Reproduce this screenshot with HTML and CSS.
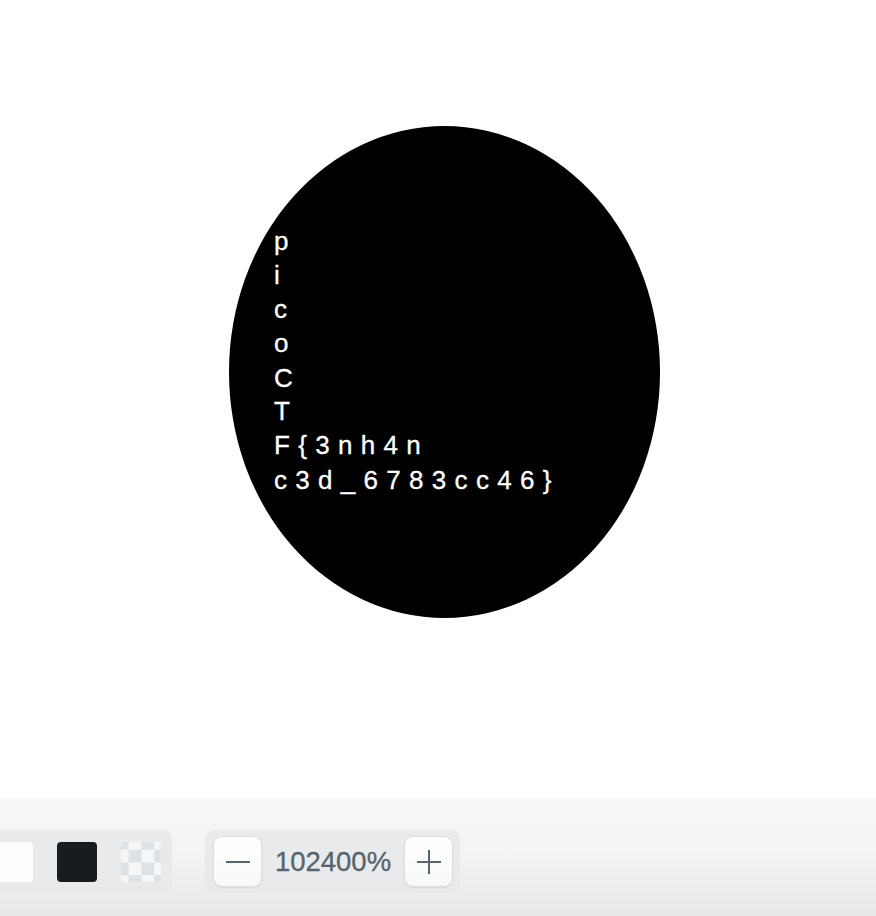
FILE: index.html
```html
<!DOCTYPE html>
<html lang="en">
<head>
<meta charset="utf-8">
<title>Image viewer</title>
<link rel="stylesheet" href="styles.css">
</head>
<body>
<main class="viewer">
  <div class="canvas">
    <svg class="drawing" width="876" height="798" viewBox="0 0 876 798" xmlns="http://www.w3.org/2000/svg">
      <ellipse cx="444.5" cy="372" rx="215.5" ry="246" fill="#000"/>
      <text class="flag" x="274" y="250">
        <tspan x="274" y="250">p</tspan>
        <tspan x="274" y="284">i</tspan>
        <tspan x="274" y="318">c</tspan>
        <tspan x="274" y="352">o</tspan>
        <tspan x="274" y="387">C</tspan>
        <tspan x="274" y="420">T</tspan>
        <tspan x="274" y="454">F{3nh4n</tspan>
        <tspan x="274" y="489">c3d_6783cc46}</tspan>
      </text>
    </svg>
  </div>
  <footer class="toolbar">
    <div class="group swatches">
      <span class="swatch swatch-white"></span>
      <span class="swatch swatch-black"></span>
      <span class="swatch swatch-checker"></span>
    </div>
    <div class="group zoom">
      <button class="zbtn" aria-label="Zoom out">
        <svg width="24" height="24" viewBox="0 0 24 24"><path d="M0 12H24" stroke="#56656f" stroke-width="2"/></svg>
      </button>
      <span class="zlevel">102400%</span>
      <button class="zbtn" aria-label="Zoom in">
        <svg width="24" height="24" viewBox="0 0 24 24"><path d="M0 12H24M12 0V24" stroke="#56656f" stroke-width="2"/></svg>
      </button>
    </div>
  </footer>
</main>
</body>
</html>
```
FILE: styles.css
```css
html, body {
  margin: 0;
  padding: 0;
  background: #fff;
  overflow: hidden;
}
.viewer {
  width: 876px;
  height: 916px;
  display: flex;
  flex-direction: column;
}
.canvas {
  height: 798px;
  background: #fff;
}
.drawing {
  display: block;
}
.flag {
  font-family: "Liberation Sans", Arial, sans-serif;
  font-size: 26px;
  letter-spacing: 8.3px;
  fill: #fff;
  stroke: #fff;
  stroke-width: 0.3px;
}
.toolbar {
  flex: 1;
  display: flex;
  align-items: flex-start;
  gap: 33px;
  padding-top: 32px;
  margin-left: -19px;
  background: linear-gradient(#f6f7f8 0%, #f3f4f5 45%, #e6e8ea 100%);
}
.group {
  display: flex;
  align-items: center;
  height: 63px;
  box-sizing: border-box;
  background: #e8eaec;
  border-radius: 9px;
}
.swatches {
  gap: 24px;
  padding: 0 11px 0 12px;
}
.swatch {
  width: 40px;
  height: 40px;
  border-radius: 4px;
  display: block;
}
.swatch-white {
  background: #fdfdfd;
}
.swatch-black {
  background: #181c1f;
}
.swatch-checker {
  background: repeating-conic-gradient(from 90deg, #dfe2e5 0 25%, #f5f6f7 0 50%);
  background-size: 25.4px 25.4px;
  background-position: -5px -5px;
}
.zoom {
  padding: 0 7px 0 8px;
}
.zbtn {
  width: 49px;
  height: 51px;
  padding: 0;
  border: 1px solid #dcdfe2;
  border-radius: 9px;
  background: linear-gradient(#ffffff, #f7f8f8);
  box-shadow: 0 1px 2px rgba(0, 0, 0, 0.08);
  display: flex;
  align-items: center;
  justify-content: center;
}
.zbtn svg {
  display: block;
}
.zlevel {
  width: 142px;
  text-align: center;
  font-family: "Liberation Sans", Arial, sans-serif;
  font-size: 27.5px;
  color: #56646e;
  -webkit-text-stroke: 0.3px #56646e;
}
```
